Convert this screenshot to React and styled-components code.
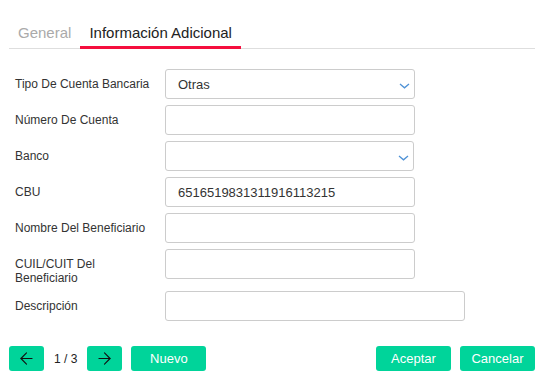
import React from 'react';
import styled, { createGlobalStyle } from 'styled-components';
import { ArrowLeft, ArrowRight } from 'lucide-react';

const GlobalStyle = createGlobalStyle`
  body {
    margin: 0;
    background: #fff;
    font-family: "Liberation Sans", Arial, sans-serif;
    color: #333;
  }
`;

const Page = styled.div`
  padding: 18px 7px 0 9px;
`;

const TabBar = styled.div`
  display: flex;
  border-bottom: 1px solid #dedede;
`;

const Tab = styled.div`
  padding: 6px 9px 5px;
  font-size: 15px;
  line-height: 17px;
  margin-bottom: -1px;
  border-bottom: 3px solid ${props => props['data-active'] ? '#f50f3e' : 'transparent'};
  color: ${props => props['data-active'] ? '#222' : '#aaa'};
  cursor: pointer;
`;

const Form = styled.div`
  display: flex;
  flex-direction: column;
  gap: 6px;
  margin-top: 20px;
  padding-left: 6px;
`;

const Row = styled.div`
  display: flex;
  align-items: flex-start;
`;

const Label = styled.div`
  width: 140px;
  margin-right: 10px;
  padding-top: 8px;
  font-size: 12px;
  line-height: 14px;
  color: #333;
`;

const Input = styled.input`
  box-sizing: border-box;
  width: ${props => props.$width || 250}px;
  height: 30px;
  margin: 0;
  padding: 0 12px;
  border: 1px solid #cccccc;
  border-radius: 3px;
  font-family: "Liberation Sans", Arial, sans-serif;
  font-size: 13px;
  color: #333;
  outline: none;
`;

const SelectBox = styled.div`
  box-sizing: border-box;
  width: ${props => props.$width || 250}px;
  height: 30px;
  padding: 0 4px 0 12px;
  display: flex;
  align-items: center;
  justify-content: space-between;
  border: 1px solid #cccccc;
  border-radius: 3px;
  font-size: 13px;
  color: #333;
  cursor: pointer;

  svg {
    margin-top: 4px;
  }
`;

const Chevron = () => (
  <svg width="11" height="6" viewBox="0 0 11 6">
    <path d="M1 1 L5.5 4.8 L10 1" fill="none" stroke="#4f92d6" strokeWidth="1.3" />
  </svg>
);

const Footer = styled.div`
  display: flex;
  align-items: center;
  justify-content: space-between;
  margin-top: 25px;
`;

const Group = styled.div`
  display: flex;
  align-items: center;
  gap: 9px;
`;

const Button = styled.button`
  box-sizing: border-box;
  width: ${props => props.$width || 75}px;
  height: 25px;
  padding: 0;
  border: none;
  border-radius: 3px;
  background: #00d49a;
  color: #fff;
  font-family: "Liberation Sans", Arial, sans-serif;
  font-size: 13px;
  display: flex;
  align-items: center;
  justify-content: center;
  cursor: pointer;
`;

const Pager = styled.span`
  font-size: 12px;
  color: #222;
  margin: 0 1px;
`;

export default function App() {
  return (
    <Page>
      <GlobalStyle />
      <TabBar>
        <Tab>General</Tab>
        <Tab data-active>Información Adicional</Tab>
      </TabBar>

      <Form>
        <Row>
          <Label>Tipo De Cuenta Bancaria</Label>
          <SelectBox>
            <span>Otras</span>
            <Chevron />
          </SelectBox>
        </Row>
        <Row>
          <Label>Número De Cuenta</Label>
          <Input />
        </Row>
        <Row>
          <Label>Banco</Label>
          <SelectBox $width={249}>
            <span></span>
            <Chevron />
          </SelectBox>
        </Row>
        <Row>
          <Label>CBU</Label>
          <Input defaultValue="6516519831311916113215" />
        </Row>
        <Row>
          <Label>Nombre Del Beneficiario</Label>
          <Input />
        </Row>
        <Row>
          <Label>CUIL/CUIT Del Beneficiario</Label>
          <Input />
        </Row>
        <Row>
          <Label>Descripción</Label>
          <Input $width={300} />
        </Row>
      </Form>

      <Footer>
        <Group>
          <Button $width={35}><ArrowLeft size={19} color="#111" strokeWidth={1.4} /></Button>
          <Pager>1 / 3</Pager>
          <Button $width={35}><ArrowRight size={19} color="#111" strokeWidth={1.4} /></Button>
          <Button>Nuevo</Button>
        </Group>
        <Group>
          <Button>Aceptar</Button>
          <Button>Cancelar</Button>
        </Group>
      </Footer>
    </Page>
  );
}
